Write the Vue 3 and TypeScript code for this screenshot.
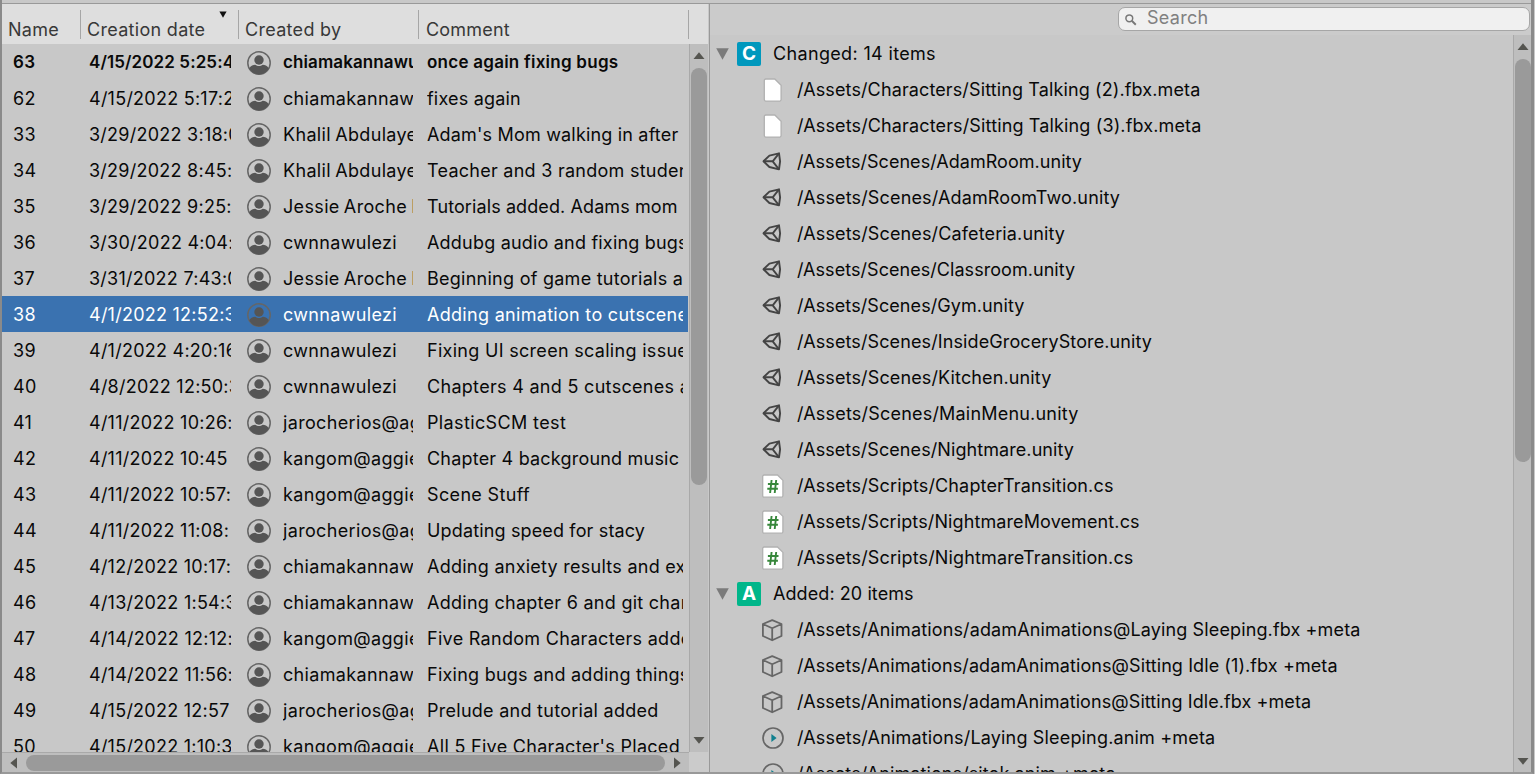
<script setup lang="ts">
interface Changeset {
  name: string
  date: string
  author: string
  comment: string
  tracking?: number
}

type Kind = 'file' | 'unity' | 'script' | 'cube' | 'anim'

interface Group {
  letter: string
  title: string
  tone: string
  tracking: number
  items: { kind: Kind; path: string; tracking: number }[]
}

const currentName = '63'
const selectedName = '38'

const changesets: Changeset[] = [
  { name: '63', date: '4/15/2022 5:25:4', author: 'chiamakannawu', comment: 'once again fixing bugs', tracking: 0.25 },
  { name: '62', date: '4/15/2022 5:17:2', author: 'chiamakannawu', comment: 'fixes again', tracking: 0.2 },
  { name: '33', date: '3/29/2022 3:18:0', author: 'Khalil Abdulaye', comment: "Adam's Mom walking in after", tracking: 0.18 },
  { name: '34', date: '3/29/2022 8:45:3', author: 'Khalil Abdulaye', comment: 'Teacher and 3 random students', tracking: 0.26 },
  { name: '35', date: '3/29/2022 9:25:1', author: 'Jessie Aroche Rios', comment: 'Tutorials added. Adams mom', tracking: 0.1 },
  { name: '36', date: '3/30/2022 4:04:', author: 'cwnnawulezi', comment: 'Addubg audio and fixing bugs', tracking: 0.2 },
  { name: '37', date: '3/31/2022 7:43:0', author: 'Jessie Aroche Rios', comment: 'Beginning of game tutorials added', tracking: 0.26 },
  { name: '38', date: '4/1/2022 12:52:3', author: 'cwnnawulezi', comment: 'Adding animation to cutscenes' },
  { name: '39', date: '4/1/2022 4:20:16', author: 'cwnnawulezi', comment: 'Fixing UI screen scaling issues' },
  { name: '40', date: '4/8/2022 12:50:3', author: 'cwnnawulezi', comment: 'Chapters 4 and 5 cutscenes a' },
  { name: '41', date: '4/11/2022 10:26:', author: 'jarocherios@aggies', comment: 'PlasticSCM test', tracking: 0.37 },
  { name: '42', date: '4/11/2022 10:45', author: 'kangom@aggies', comment: 'Chapter 4 background music', tracking: 0.2 },
  { name: '43', date: '4/11/2022 10:57:', author: 'kangom@aggies', comment: 'Scene Stuff', tracking: 0.35 },
  { name: '44', date: '4/11/2022 11:08:', author: 'jarocherios@aggies', comment: 'Updating speed for stacy', tracking: 0.15 },
  { name: '45', date: '4/12/2022 10:17:', author: 'chiamakannawu', comment: 'Adding anxiety results and ex', tracking: 0.26 },
  { name: '46', date: '4/13/2022 1:54:3', author: 'chiamakannawu', comment: 'Adding chapter 6 and git changes', tracking: 0.27 },
  { name: '47', date: '4/14/2022 12:12:', author: 'kangom@aggies', comment: 'Five Random Characters added' },
  { name: '48', date: '4/14/2022 11:56:', author: 'chiamakannawu', comment: 'Fixing bugs and adding things', tracking: 0.25 },
  { name: '49', date: '4/15/2022 12:57', author: 'jarocherios@aggies', comment: 'Prelude and tutorial added', tracking: 0.27 },
  { name: '50', date: '4/15/2022 1:10:3', author: 'kangom@aggies', comment: "All 5 Five Character's Placed" },
]

const groups: Group[] = [
  {
    letter: 'C',
    title: 'Changed: 14 items',
    tone: 'changed',
    tracking: 0.34,
    items: [
      { kind: 'file', path: '/Assets/Characters/Sitting Talking (2).fbx.meta', tracking: 0.12 },
      { kind: 'file', path: '/Assets/Characters/Sitting Talking (3).fbx.meta', tracking: 0.14 },
      { kind: 'unity', path: '/Assets/Scenes/AdamRoom.unity', tracking: 0.04 },
      { kind: 'unity', path: '/Assets/Scenes/AdamRoomTwo.unity', tracking: 0.15 },
      { kind: 'unity', path: '/Assets/Scenes/Cafeteria.unity', tracking: 0.14 },
      { kind: 'unity', path: '/Assets/Scenes/Classroom.unity', tracking: 0.05 },
      { kind: 'unity', path: '/Assets/Scenes/Gym.unity', tracking: 0.08 },
      { kind: 'unity', path: '/Assets/Scenes/InsideGroceryStore.unity', tracking: 0.11 },
      { kind: 'unity', path: '/Assets/Scenes/Kitchen.unity', tracking: 0.13 },
      { kind: 'unity', path: '/Assets/Scenes/MainMenu.unity', tracking: 0.2 },
      { kind: 'unity', path: '/Assets/Scenes/Nightmare.unity', tracking: 0.08 },
      { kind: 'script', path: '/Assets/Scripts/ChapterTransition.cs', tracking: 0.15 },
      { kind: 'script', path: '/Assets/Scripts/NightmareMovement.cs', tracking: 0.11 },
      { kind: 'script', path: '/Assets/Scripts/NightmareTransition.cs', tracking: 0.14 },
    ],
  },
  {
    letter: 'A',
    title: 'Added: 20 items',
    tone: 'added',
    tracking: 0.08,
    items: [
      { kind: 'cube', path: '/Assets/Animations/adamAnimations@Laying Sleeping.fbx +meta', tracking: 0.13 },
      { kind: 'cube', path: '/Assets/Animations/adamAnimations@Sitting Idle (1).fbx +meta', tracking: 0.09 },
      { kind: 'cube', path: '/Assets/Animations/adamAnimations@Sitting Idle.fbx +meta', tracking: 0.08 },
      { kind: 'anim', path: '/Assets/Animations/Laying Sleeping.anim +meta', tracking: 0.17 },
      { kind: 'anim', path: '/Assets/Animations/sitok.anim +meta', tracking: 0.08 },
    ],
  },
]

const spacing = (tracking = 0.3) => ({ letterSpacing: `${tracking}px` })
</script>

<template>
  <div class="window">
    <section class="history">
      <div class="columns">
        <div class="col c-name">Name</div>
        <div class="col c-date">
          <span>Creation date</span>
          <svg class="sort" width="8" height="7" viewBox="0 0 8 7"><path d="M.4.4h7.2L4 6.8z" /></svg>
        </div>
        <div class="col c-author">Created by</div>
        <div class="col c-comment">Comment</div>
      </div>
      <div class="middle">
        <div class="rows">
          <div
            v-for="c in changesets"
            :key="c.name"
            class="row"
            :class="{ current: c.name === currentName, selected: c.name === selectedName }"
          >
            <span class="t-name">{{ c.name }}</span>
            <span class="t-date">{{ c.date }}</span>
            <svg class="avatar" width="24" height="24" viewBox="0 0 24 24">
              <circle cx="12" cy="12" r="11.2" fill="none" stroke="#666" stroke-width="1.5" />
              <circle cx="12" cy="9" r="4.7" />
              <path d="M2.2 17.2C4 14.8 6.2 13.8 8.2 13.8c1.3.9 2.4 1.300 3.800 1.300s2.500-.4 3.800-1.300c2 0 4.200 1 6 3.400A11.200 11.200 0 0 1 12 23.400 11.200 11.200 0 0 1 2.200 17.200z" />
            </svg>
            <span class="t-author">{{ c.author }}</span>
            <span class="t-comment" :style="spacing(c.tracking)">{{ c.comment }}</span>
          </div>
        </div>
        <div class="vbar left-bar">
          <svg width="12" height="7" viewBox="0 0 12 7"><path d="M.5 7 6 .3 11.500 7z" /></svg>
          <div class="thumb"></div>
          <svg class="down" width="12" height="7" viewBox="0 0 12 7"><path d="M.5 0 6 6.700 11.500 0z" /></svg>
        </div>
      </div>
      <div class="foot">
        <div class="hbar">
          <svg width="7" height="12" viewBox="0 0 7 12"><path d="M7 .5.3 6 7 11.500z" /></svg>
          <div class="thumb"></div>
          <svg width="7" height="12" viewBox="0 0 7 12"><path d="M0 .5 6.700 6 0 11.500z" /></svg>
        </div>
      </div>
    </section>

    <section class="details">
      <div class="toolbar">
        <div class="search">
          <svg width="12" height="12" viewBox="0 0 12 12" fill="none" stroke="#777">
            <circle cx="4.300" cy="4.300" r="3.400" stroke-width="1.500" />
            <path d="M6.800 6.800l4 3.900" stroke-width="1.900" />
          </svg>
          <span>Search</span>
        </div>
      </div>
      <div class="middle">
        <div class="tree">
          <template v-for="g in groups" :key="g.letter">
            <div class="group">
              <svg class="fold" width="13" height="12" viewBox="0 0 13 12"><path d="M.2.200h12.600L6.500 11.800z" fill="#7b7b7b" /></svg>
              <span class="badge" :class="g.tone">{{ g.letter }}</span>
              <span :style="spacing(g.tracking)">{{ g.title }}</span>
            </div>
            <div v-for="item in g.items" :key="item.path" class="item">
              <svg v-if="item.kind === 'file'" class="icon" width="24" height="24" viewBox="0 0 24 24">
                <path d="M5.800 1h9L21.100 7.300v14.300a1.500 1.500 0 0 1-1.500 1.500H5.800A1.500 1.500 0 0 1 4.300 21.600V2.500A1.500 1.500 0 0 1 5.800 1z" fill="#fff" stroke="#b1b1b1" stroke-width="1.300" />
              </svg>
              <svg v-else-if="item.kind === 'unity'" class="icon" width="24" height="24" viewBox="0 0 24 24" fill="none" stroke="#444" stroke-width="1.900" stroke-linejoin="round">
                <path d="M3.500 11.300 9.400 5.600 19 3.300 20.100 11.300 19 19.300 9.400 17z" />
                <path d="M3.500 11.300h9.200M12.700 11.300l6.300-8M12.700 11.300l6.300 8" />
              </svg>
              <svg v-else-if="item.kind === 'script'" class="icon" width="24" height="24" viewBox="0 0 24 24">
                <path d="M4.200 1h13.300l5.400 5.400V21.700a1.500 1.500 0 0 1-1.500 1.500H4.200A1.500 1.500 0 0 1 2.700 21.700V2.500A1.500 1.500 0 0 1 4.200 1z" fill="#fff" stroke="#b1b1b1" stroke-width="1.300" />
                <path d="M11.600 6 10.100 19M16.200 6 14.700 19M7.900 10h10.600M7.300 14.800h10.600" fill="none" stroke="#37873b" stroke-width="1.900" />
              </svg>
              <svg v-else-if="item.kind === 'cube'" class="icon" width="24" height="24" viewBox="0 0 24 24" fill="none" stroke="#666" stroke-width="1.800" stroke-linejoin="round">
                <path d="M12.200 2.200 21.500 6V18L12.200 22.300 2.900 18V6zM2.900 6 12.200 10.200l9.300-4.200M12.200 10.200v12" />
              </svg>
              <svg v-else class="icon" width="24" height="24" viewBox="0 0 24 24">
                <circle cx="13" cy="12" r="10" fill="none" stroke="#666" stroke-width="1.700" />
                <path d="M11.400 8 16.600 12 11.400 16z" fill="#11808f" />
              </svg>
              <span :style="spacing(item.tracking)">{{ item.path }}</span>
            </div>
          </template>
        </div>
        <div class="vbar right-bar">
          <svg width="12" height="7" viewBox="0 0 12 7"><path d="M.5 7 6 .3 11.500 7z" /></svg>
          <div class="thumb"></div>
          <svg class="down" width="12" height="7" viewBox="0 0 12 7"><path d="M.5 0 6 6.700 11.500 0z" /></svg>
        </div>
      </div>
    </section>
  </div>
</template>

<style>
body {
  margin: 0;
  background: #c8c8c8;
}
</style>

<style scoped>
* {
  box-sizing: border-box;
}

.window {
  width: 1534px;
  height: 774px;
  display: flex;
  border-left: 2px solid #8a8a8a;
  border-right: 3px solid #8a8a8a;
  border-bottom: 2px solid #999;
  background: linear-gradient(#c8c8c8 3px, #999 3px, #999 4px, #c8c8c8 4px);
  padding-top: 4px;
  overflow: hidden;
  font-family: Inter, "Liberation Sans", sans-serif;
  font-size: 18px;
  letter-spacing: 0.3px;
  line-height: 36px;
  color: #090909;
  white-space: pre;
}

svg {
  display: block;
  flex: none;
}

.history {
  width: 708px;
  flex: none;
  display: flex;
  flex-direction: column;
  border-right: 1px solid #999;
  background: #c8c8c8;
}

.columns {
  flex: none;
  height: 40px;
  display: flex;
  padding-top: 6px;
  background: #dedede;
  color: #383838;
  margin-right: 1px;
}

.col {
  height: 29px;
  line-height: 40px;
  border-right: 1px solid #a6a6a6;
  padding-left: 6px;
  display: flex;
  justify-content: space-between;
}

.c-name { width: 79px; }
.c-date { width: 158px; }
.c-author { width: 180px; }
.c-comment { width: 270px; padding-left: 7px; letter-spacing: 0.2px; }

.sort {
  margin: 1px 11px 0 0;
  fill: #111;
}

.middle {
  flex: 1;
  min-height: 0;
  display: flex;
}

.rows {
  width: 686px;
  margin-right: 1px;
  overflow: hidden;
}

.row {
  height: 36px;
  line-height: 38px;
  display: flex;
  padding-left: 11px;
}

.row span {
  overflow: hidden;
  flex: none;
}

.t-name { width: 76px; }
.t-date { width: 142px; margin-right: 16px; letter-spacing: 0.25px; }
.t-author { width: 130px; margin-right: 14px; letter-spacing: 0.34px; word-spacing: -1.2px; }
.t-comment { width: 256px; }

.avatar {
  margin: 7px 12px 0 0;
  fill: #555;
}

.current {
  font-weight: 600;
  font-size: 17px;
  line-height: 37px;
}

.current .t-date,
.current .t-author {
  letter-spacing: 0.1px;
}

.selected {
  background: #3a72b0;
  color: #fff;
}

.vbar {
  flex: none;
  display: flex;
  flex-direction: column;
  align-items: center;
  background: #bebebe;
  border-left: 1px solid #a9a9a9;
  fill: #555550;
}

.thumb {
  background: #9a9a9a;
  border-radius: 8px;
}

.left-bar {
  width: 19px;
  padding: 8px 0;
}

.left-bar .thumb {
  width: 16px;
  height: 417px;
  margin-top: 9px;
}

.down {
  margin-top: auto;
}

.foot {
  flex: none;
  height: 20px;
  display: flex;
  background: #cbcbcb;
}

.hbar {
  width: 687px;
  display: flex;
  align-items: center;
  padding: 1px 7px 0 8px;
  background: #bebebe;
  border-top: 1px solid #a9a9a9;
  fill: #555550;
}

.hbar .thumb {
  width: 639px;
  height: 16px;
  margin: 0 9px;
}

.details {
  flex: 1;
  min-width: 0;
  display: flex;
  flex-direction: column;
}

.toolbar {
  flex: none;
  height: 31px;
  background: #cbcbcb;
  display: flex;
  justify-content: flex-end;
  padding: 3px 1px 0 0;
}

.search {
  width: 412px;
  height: 24px;
  border: 1px solid #a6a6a6;
  border-radius: 7px;
  background: #f0f0f0;
  display: flex;
  color: #808080;
  line-height: 20px;
}

.search svg {
  margin: 6px 10px 0 6px;
}

.tree {
  flex: 1;
  min-width: 0;
  overflow: hidden;
  padding-top: 1px;
}

.group,
.item {
  height: 36px;
  display: flex;
}

.fold {
  margin: 12px 8px 0 6px;
}

.badge {
  width: 24px;
  height: 24px;
  margin: 6px 12px 0 0;
  border-radius: 2px;
  color: #fff;
  font-weight: 700;
  font-size: 19px;
  line-height: 24px;
  letter-spacing: 0;
  text-align: center;
}

.changed { background: #0098bd; }
.added { background: #00b68a; }

.item {
  padding-left: 50px;
}

.icon {
  margin: 6px 13px 0 0;
}

.right-bar {
  width: 18px;
  padding: 8px 0 7px;
}

.right-bar .thumb {
  width: 16px;
  height: 403px;
  margin-top: 9px;
}
</style>
